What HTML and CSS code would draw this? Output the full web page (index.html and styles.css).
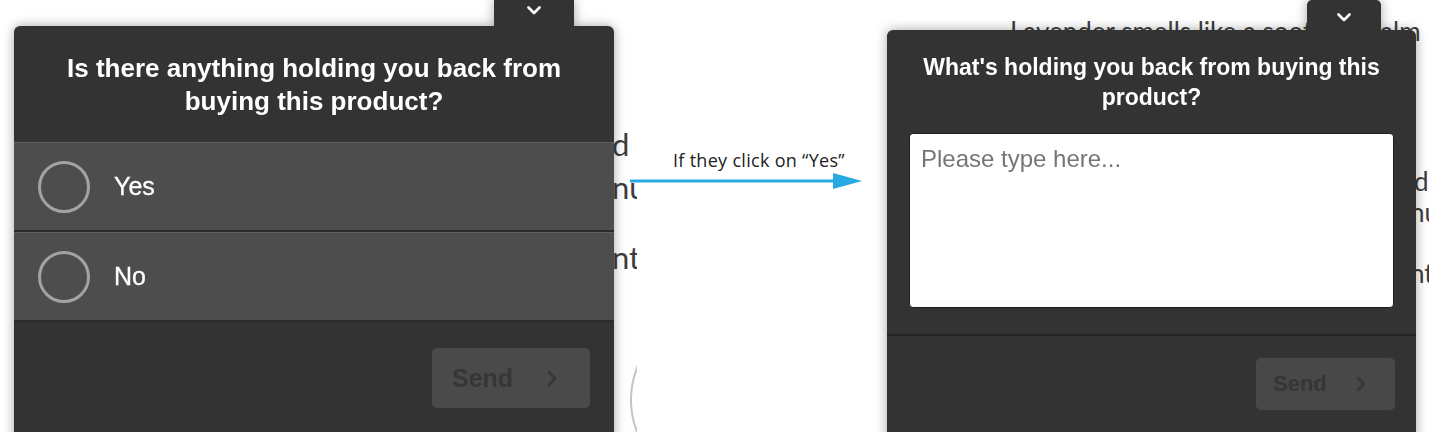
FILE: index.html
```html
<!DOCTYPE html>
<html lang="en">
<head>
<meta charset="utf-8">
<title>Survey flow</title>
<link rel="stylesheet" href="styles.css">
</head>
<body>
<div class="stage">
  <section class="shot shot-a">
    <div class="backdrop backdrop-a">
      <p class="frag frag-1">d</p>
      <p class="frag frag-2">nu</p>
      <p class="frag frag-3">nta</p>
      <span class="ring"></span>
    </div>
    <div class="widget widget-a">
      <div class="tab tab-a">
        <svg class="chev" width="14" height="9" viewBox="0 0 14 9"><polyline points="1.5,1.5 7,7 12.5,1.5" fill="none" stroke="#fff" stroke-width="2.6" stroke-linecap="round" stroke-linejoin="round"/></svg>
      </div>
      <div class="panel">
        <h2 class="q q-a">Is there anything holding you back from buying this product?</h2>
        <div class="options">
          <div class="option"><span class="radio"></span><span class="opt-label">Yes</span></div>
          <div class="option"><span class="radio"></span><span class="opt-label">No</span></div>
        </div>
        <div class="footer footer-a">
          <button class="send send-a" type="button"><span>Send</span>
            <svg width="10" height="17" viewBox="0 0 10 17"><polyline points="2,2 8,8.5 2,15" fill="none" stroke="#383838" stroke-width="3" stroke-linecap="round" stroke-linejoin="round"/></svg>
          </button>
        </div>
      </div>
    </div>
  </section>

  <div class="flow">
    <p class="flow-label">If they click on “Yes”</p>
    <svg class="arrow" width="232" height="20" viewBox="0 0 232 20"><line x1="0" y1="10" x2="206" y2="10" stroke="#29a9e1" stroke-width="3"/><polygon points="203,2 232,10 203,18" fill="#29a9e1"/></svg>
  </div>

  <section class="shot shot-b">
    <div class="backdrop backdrop-b">
      <p class="lead">Lavender smells like a soothing calm</p>
      <p class="frag frag-b1">d</p>
      <p class="frag frag-b2">nu</p>
      <p class="frag frag-b3">nta</p>
    </div>
    <div class="widget widget-b">
      <div class="tab tab-b">
        <svg class="chev" width="14" height="9" viewBox="0 0 14 9"><polyline points="1.5,1.5 7,7 12.5,1.5" fill="none" stroke="#fff" stroke-width="2.6" stroke-linecap="round" stroke-linejoin="round"/></svg>
      </div>
      <div class="panel">
        <h2 class="q q-b">What's holding you back from buying this product?</h2>
        <div class="answer">
          <textarea class="field" placeholder="Please type here..."></textarea>
        </div>
        <div class="footer footer-b">
          <button class="send send-b" type="button"><span>Send</span>
            <svg width="10" height="16" viewBox="0 0 10 16"><polyline points="2,2 7.5,8 2,14" fill="none" stroke="#383838" stroke-width="2.8" stroke-linecap="round" stroke-linejoin="round"/></svg>
          </button>
        </div>
      </div>
    </div>
  </section>
</div>
</body>
</html>
```

FILE: styles.css
```css
* { box-sizing: border-box; }

body {
  margin: 0;
  background: #ffffff;
  font-family: "Liberation Sans", Arial, sans-serif;
}

.stage {
  display: flex;
  height: 432px;
  overflow: hidden;
}

.shot {
  position: relative;
  height: 432px;
  overflow: hidden;
  flex: none;
}

.shot-a { width: 637px; }
.shot-b { flex: 1; }

/* page content lying behind the widgets */
.backdrop {
  position: absolute;
  inset: 0;
  font-family: Lato, "Open Sans", sans-serif;
  color: #3d3d3d;
}

.backdrop p { margin: 0; white-space: nowrap; }

.backdrop-a { padding-top: 123px; font-size: 31px; line-height: 43px; }
.backdrop-a .frag { margin-left: 612px; }
.backdrop-a .frag-3 { margin-top: 27px; }

.ring {
  position: absolute;
  left: 630px;
  top: 310px;
  width: 180px;
  height: 180px;
  border: 2px solid #c4c4c4;
  border-radius: 50%;
}

.backdrop-b { padding-top: 16px; font-size: 26px; line-height: 31px; }
.backdrop-b .lead { margin-left: 140px; }
.backdrop-b .frag { margin-left: 540px; }
.backdrop-b .frag-b1 { margin-top: 119px; margin-left: 544px; }
.backdrop-b .frag-b3 { margin-top: 30px; }

/* widget */
.widget {
  position: relative;
  z-index: 1;
  display: flex;
  flex-direction: column;
  align-items: flex-start;
  filter: drop-shadow(0 0 6px rgba(0, 0, 0, 0.35));
}

.widget-a { margin-left: 14px; width: 600px; }
.widget-b { margin-left: 17px; width: 529px; }

.tab {
  background: #333333;
  display: flex;
  justify-content: center;
}

.chev { display: block; }

.tab-a { margin-left: 480px; width: 80px; height: 26px; padding-top: 6px; }
.tab-b { margin-left: 420px; width: 74px; height: 30px; padding-top: 13px; border-radius: 5px 5px 0 0; }

.panel {
  width: 100%;
  background: #333333;
  border-radius: 6px 6px 0 0;
}

.q {
  margin: 0;
  color: #ffffff;
  font-weight: bold;
  text-align: center;
}

.q-a { padding: 26px 30px 24px; font-size: 26px; line-height: 33px; }
.q-b { padding: 22px 20px 21px; font-size: 23px; line-height: 30px; }

.option {
  display: flex;
  align-items: center;
  height: 90px;
  padding-left: 24px;
  background: #4d4d4d;
  border-top: 1px solid #5e5e5e;
  border-bottom: 2px solid #2c2c2c;
}

.radio {
  width: 52px;
  height: 52px;
  border: 3px solid #a3a3a3;
  border-radius: 50%;
  flex: none;
}

.opt-label {
  margin-left: 24px;
  font-size: 25px;
  color: #ffffff;
  -webkit-text-stroke: 0.3px #ffffff;
}

.footer {
  display: flex;
  justify-content: flex-end;
}

.footer-a { padding: 26px 24px 40px; }
.footer-b { padding: 22px 21px 40px; }

.send {
  display: flex;
  align-items: center;
  border: none;
  background: #4a4a4a;
  color: #363636;
  font-family: "Liberation Sans", Arial, sans-serif;
  font-weight: bold;
  cursor: default;
}

.send-a { width: 158px; height: 60px; padding: 0 0 0 20px; border-radius: 5px; font-size: 25px; gap: 34px; }
.send-b { width: 139px; height: 52px; padding: 0 0 0 17px; border-radius: 5px; font-size: 22px; gap: 29px; background: #484848; }

.answer {
  padding: 0 22px 26px;
  border-bottom: 2px solid #232323;
}

.field {
  display: block;
  width: 100%;
  height: 175px;
  padding: 11px 11px;
  border: 1px solid #1e1e1e;
  border-radius: 4px;
  background: #ffffff;
  font-family: "Liberation Sans", Arial, sans-serif;
  font-size: 24px;
  color: #333333;
  resize: none;
  outline: none;
}

.field::placeholder { color: #767676; opacity: 1; }

/* middle annotation */
.flow {
  width: 233px;
  flex: none;
  padding-top: 150px;
  position: relative;
  z-index: 2;
}

.flow-label {
  margin: 0 0 0 36px;
  font-family: "Open Sans", Lato, sans-serif;
  font-size: 18px;
  line-height: 21px;
  letter-spacing: 0.3px;
  color: #222222;
  white-space: nowrap;
}

.arrow {
  display: block;
  margin-left: -7px;
}
```
